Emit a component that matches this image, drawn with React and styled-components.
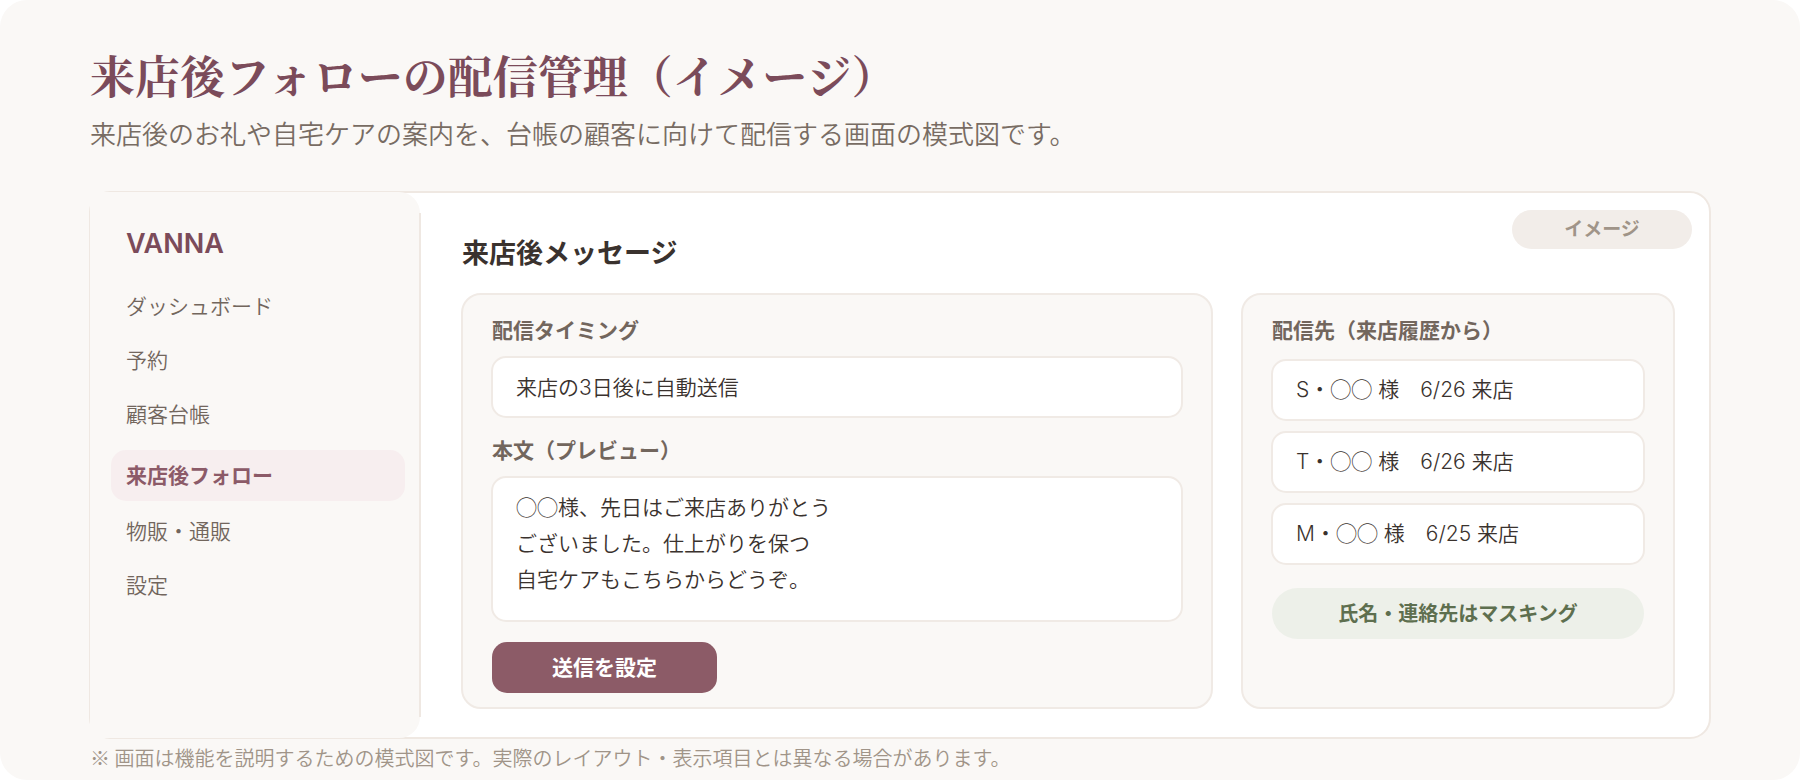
import React, { useState, } from "react";
import styled, { createGlobalStyle, } from "styled-components";

const navItems = ["ダッシュボード", "予約", "顧客台帳", "来店後フォロー", "物販・通販", "設定"];

const recipients = [
  { initial: "S", visited: "6/26", },
  { initial: "T", visited: "6/26", },
  { initial: "M", visited: "6/25", },
];

const defaultBody = "◯◯様、先日はご来店ありがとう\nございました。仕上がりを保つ\n自宅ケアもこちらからどうぞ。";

const App = () => {
  const [active, setActive] = useState("来店後フォロー");
  const [timing, setTiming] = useState("来店の3日後に自動送信");
  const [body, setBody] = useState(defaultBody);

  return (
    <Page>
      <GlobalStyle />
      <Title>来店後フォローの配信管理（イメージ）</Title>
      <Lead>来店後のお礼や自宅ケアの案内を、台帳の顧客に向けて配信する画面の模式図です。</Lead>
      <Frame>
        <Sidebar>
          <Brand>VANNA</Brand>
          <nav>
            { navItems.map( name => (
              <NavLink key={name} href="#" $active={name === active} onClick={() => setActive(name)}>
                {name}
              </NavLink>
            ))}
          </nav>
        </Sidebar>
        <Divider />
        <Main>
          <Badge>イメージ</Badge>
          <Heading>来店後メッセージ</Heading>
          <Columns>
            <Card>
              <Label htmlFor="timing">配信タイミング</Label>
              <TextInput id="timing" value={timing} onChange={ e => setTiming(e.target.value) } />
              <Label htmlFor="body">本文（プレビュー）</Label>
              <TextArea id="body" rows={3} value={body} onChange={ e => setBody(e.target.value) } />
              <Button type="button">送信を設定</Button>
            </Card>
            <Card>
              <CardTitle>配信先（来店履歴から）</CardTitle>
              <List>
                { recipients.map( r => (
                  <Recipient key={r.initial}>{r.initial}・<Masked>◯◯</Masked> 様　{r.visited} 来店</Recipient>
                ))}
              </List>
              <Notice>氏名・連絡先はマスキング</Notice>
            </Card>
          </Columns>
        </Main>
      </Frame>
      <Footnote>※ 画面は機能を説明するための模式図です。実際のレイアウト・表示項目とは異なる場合があります。</Footnote>
    </Page>
  );
};

const GlobalStyle = createGlobalStyle`
  * {
    box-sizing: border-box;
  }

  body {
    margin: 0;
    background: #ffffff;
    color: #3a322e;
    font-family: Inter, "Noto Sans CJK JP", sans-serif;
    font-size: 21px;
    font-weight: 350;
    line-height: 30px;
  }

  input, textarea, button {
    font: inherit;
    color: inherit;
  }
`;

const Page = styled.div`
  padding: 45px 89px 7px;
  border-radius: 27px;
  background: #faf8f6;
`;

const Title = styled.h1`
  margin: 0;
  padding-left: 1px;
  color: #7b4b5a;
  font-family: "Noto Serif CJK JP", "Noto Sans CJK JP", serif;
  font-size: 45px;
  font-weight: 700;
  line-height: 60px;
`;

const Lead = styled.p`
  margin: 12px 0 38px;
  padding-left: 1px;
  color: #786c63;
  font-size: 26px;
  line-height: 36px;
`;

const Frame = styled.div`
  display: flex;
  border: 2px solid #efe8e2;
  border-radius: 21px;
  background: #ffffff;
`;

/* square on the left, so it hides the frame's rounded corners there */
const Sidebar = styled.aside`
  flex: 0 0 330px;
  margin: -1px 0 -1px -1px;
  padding: 34px 15px 0 21px;
  border-radius: 0 21px 21px 0;
  background: #faf8f6;
`;

const Divider = styled.div`
  flex: 0 0 2px;
  margin: 20px 0 20px -1px;
  background: #efe8e2;
`;

const Brand = styled.div`
  margin-bottom: 18px;
  padding-left: 15px;
  color: #7b4b5a;
  font-size: 27px;
  font-weight: 600;
  line-height: 36px;
`;

const NavLink = styled.a`
  display: block;
  margin: ${ props => props.$active ? "8px 0 4px" : "0" };
  padding: ${ props => props.$active ? "1px 0 0 15px" : "0 0 0 15px" };
  border-radius: 15px;
  background: ${ props => props.$active ? "#f7eeef" : "transparent" };
  color: ${ props => props.$active ? "#8c5a68" : "#72665d" };
  font-weight: ${ props => props.$active ? 600 : 350 };
  line-height: ${ props => props.$active ? "50px" : "54px" };
  text-decoration: none;
`;

const Main = styled.main`
  position: relative;
  flex: 1;
  min-width: 0;
  padding: 43px 34px 28px 40px;
`;

const Badge = styled.span`
  position: absolute;
  top: 17px;
  right: 17px;
  width: 180px;
  padding-top: 1px;
  border-radius: 20px;
  background: #f2ede9;
  color: #a09488;
  font-size: 19px;
  font-weight: 600;
  line-height: 38px;
  text-align: center;
`;

const Heading = styled.h2`
  margin: 0 0 21px;
  padding-left: 1px;
  font-size: 27px;
  font-weight: 600;
  line-height: 36px;
`;

const Columns = styled.div`
  display: grid;
  grid-template-columns: minmax(0, 752fr) minmax(0, 434fr);
  gap: 28px;
`;

const Card = styled.section`
  padding: 21px 28px 14px;
  border: 2px solid #f0eae5;
  border-radius: 20px;
  background: #faf8f6;
`;

const Label = styled.label`
  display: block;
  margin-bottom: 10px;
  padding-left: 1px;
  color: #72665d;
  font-weight: 600;
`;

const CardTitle = styled.h3`
  margin: 0 0 13px;
  padding-left: 1px;
  color: #72665d;
  font-size: 21px;
  font-weight: 600;
`;

const TextInput = styled.input`
  display: block;
  width: 100%;
  height: 62px;
  margin-bottom: 18px;
  padding: 0 23px 2px;
  border: 2px solid #f0eae5;
  border-radius: 15px;
  background: #ffffff;
`;

const TextArea = styled.textarea`
  display: block;
  width: 100%;
  height: 146px;
  padding: 10px 23px;
  border: 2px solid #f0eae5;
  border-radius: 15px;
  background: #ffffff;
  font-family: "Noto Sans CJK JP", sans-serif;
  line-height: 36px;
  resize: none;
  overflow: hidden;
`;

const Button = styled.button`
  display: block;
  width: 225px;
  height: 51px;
  margin: 20px 0 0 1px;
  padding: 0;
  border: none;
  border-radius: 15px;
  background: #8c5b67;
  color: #ffffff;
  font-weight: 600;
  cursor: pointer;
`;

const List = styled.ul`
  display: flex;
  flex-direction: column;
  gap: 10px;
  margin: 0;
  padding: 0;
  list-style: none;
`;

const Recipient = styled.li`
  padding: 0 23px;
  border: 2px solid #f0eae5;
  border-radius: 15px;
  background: #ffffff;
  line-height: 58px;
`;

const Masked = styled.span`
  font-family: "Noto Sans CJK JP", sans-serif;
  line-height: 30px;
`;

const Notice = styled.p`
  margin: 23px 1px 0;
  padding-top: 2px;
  border-radius: 26px;
  background: #edf0e9;
  color: #5e6f4f;
  font-size: 20px;
  font-weight: 600;
  line-height: 49px;
  text-align: center;
`;

const Footnote = styled.p`
  margin: 4px 0 0;
  padding-left: 1px;
  color: #a09488;
  font-family: "Noto Sans CJK JP", sans-serif;
  font-size: 20px;
`;

export default App;
